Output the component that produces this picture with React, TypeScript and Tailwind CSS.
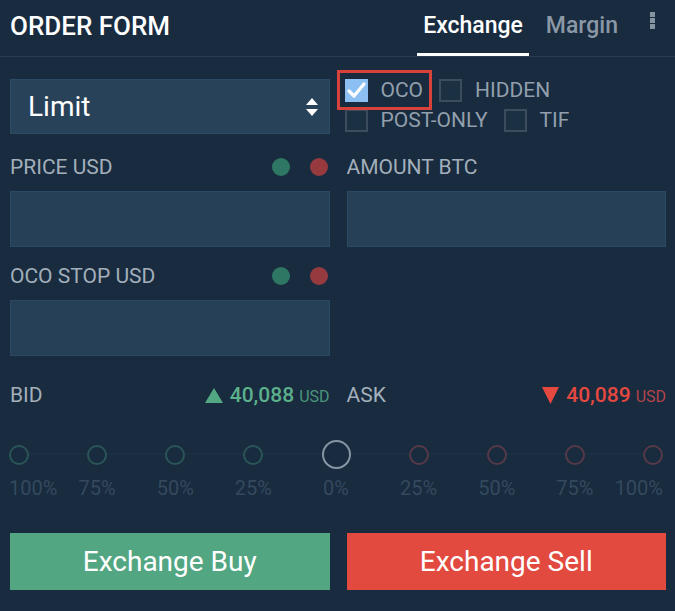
import React from "react";

const font = { fontFamily: "Roboto, 'Noto Sans', Arial, sans-serif" };

function Check({ checked, label }: { checked?: boolean; label: string }) {
  return (
    <div className="flex items-center gap-[13px]">
      {checked ? (
        <div className="w-[23px] h-[23px] bg-[#8cc0f2] flex items-center justify-center">
          <svg width="19" height="17" viewBox="0 0 19 17">
            <path d="M2 9 L7 14 L17 2" fill="none" stroke="#ffffff" strokeWidth="3.2" strokeLinecap="round" strokeLinejoin="round" />
          </svg>
        </div>
      ) : (
        <div className="w-[23px] h-[23px] border-2 border-[#3a4c5d] bg-[#1c3044]" />
      )}
      <span className="text-[21px] leading-none text-[#929fac]">{label}</span>
    </div>
  );
}

function Dots() {
  return (
    <div className="flex items-center gap-[20px]">
      <div className="w-[18px] h-[18px] rounded-full bg-[#2e7764]" />
      <div className="w-[18px] h-[18px] rounded-full bg-[#973a3f]" />
    </div>
  );
}

function Field({ label, dots }: { label: string; dots?: boolean }) {
  return (
    <div className="flex flex-col">
      <div className="h-[24px] flex items-center justify-between pr-[2px]">
        <span className="text-[21px] leading-none text-[#a3afba]">{label}</span>
        {dots && <Dots />}
      </div>
      <div className="mt-[12px] h-[56px] bg-[#264157] border border-[#2a4963]" />
    </div>
  );
}

const ticks: { label: string; kind: "g" | "c" | "r" }[] = [
  { label: "100%", kind: "g" },
  { label: "75%", kind: "g" },
  { label: "50%", kind: "g" },
  { label: "25%", kind: "g" },
  { label: "0%", kind: "c" },
  { label: "25%", kind: "r" },
  { label: "50%", kind: "r" },
  { label: "75%", kind: "r" },
  { label: "100%", kind: "r" },
];

export default function App() {
  return (
    <div className="w-[675px] h-[611px] bg-[#182b3f] text-white overflow-hidden" style={font}>
      {/* Header */}
      <div className="h-[57px] border-b border-[#2a3d50] flex justify-between pl-[10px] pr-[20px]">
        <div className="flex items-center pb-[4px] text-[26px] font-medium text-white">ORDER FORM</div>
        <div className="flex h-full">
          <div className="h-full px-[6px] flex items-center border-b-[3px] border-white pb-[1px] text-[23px] font-medium text-white">
            Exchange
          </div>
          <div className="h-full ml-[11px] px-[6px] flex items-center border-b-[3px] border-transparent pb-[1px] text-[23px] font-medium text-[#8a98a6]">
            Margin
          </div>
          <div className="ml-[26px] pt-[12px] flex flex-col gap-[1px]">
            <div className="w-[5px] h-[5px] bg-[#8694a2]" />
            <div className="w-[5px] h-[5px] bg-[#8694a2]" />
            <div className="w-[5px] h-[5px] bg-[#8694a2]" />
          </div>
        </div>
      </div>

      <div className="pl-[10px] pr-[9px] pt-[22px]">
        <div className="grid grid-cols-2 gap-x-[17px]">
          {/* Left column */}
          <div className="flex flex-col">
            <div className="h-[55px] bg-[#274259] border border-[#2b4a64] flex items-center justify-between pl-[17px] pr-[10px]">
              <span className="text-[28px] leading-none text-white">Limit</span>
              <svg width="14" height="20" viewBox="0 0 14 20">
                <path d="M7 1 L13 8 L1 8 Z" fill="#ffffff" />
                <path d="M7 19 L13 12 L1 12 Z" fill="#ffffff" />
              </svg>
            </div>
            <div className="mt-[21px]">
              <Field label="PRICE USD" dots />
            </div>
            <div className="mt-[17px]">
              <Field label="OCO STOP USD" dots />
            </div>
          </div>
          {/* Right column */}
          <div className="flex flex-col">
            <div className="h-[55px] flex flex-col gap-[7px] -ml-[2px]">
              <div className="flex items-center gap-[16px]">
                <div className="relative">
                  <Check checked label="OCO" />
                  <div className="absolute -left-[8px] -top-[9px] -right-[9px] -bottom-[8px] border-[3px] border-[#d9413b] pointer-events-none" />
                </div>
                <Check label="HIDDEN" />
              </div>
              <div className="flex items-center gap-[16px]">
                <Check label="POST-ONLY" />
                <Check label="TIF" />
              </div>
            </div>
            <div className="mt-[21px]">
              <Field label="AMOUNT BTC" />
            </div>
          </div>
        </div>

        {/* Bid / Ask */}
        <div className="mt-[27px] grid grid-cols-2 gap-x-[17px]">
          <div className="h-[24px] flex items-center justify-between">
            <span className="text-[21px] leading-none text-[#a3afba]">BID</span>
            <div className="flex items-baseline">
              <svg width="18" height="15" viewBox="0 0 18 15" className="mr-[7px] self-center">
                <path d="M9 0 L18 15 L0 15 Z" fill="#53a883" />
              </svg>
              <span className="text-[21px] leading-none font-medium text-[#5cb08c]">40,088</span>
              <span className="ml-[5px] text-[16px] leading-none text-[#4a967a]">USD</span>
            </div>
          </div>
          <div className="h-[24px] flex items-center justify-between">
            <span className="text-[21px] leading-none text-[#a3afba]">ASK</span>
            <div className="flex items-baseline">
              <svg width="17" height="17" viewBox="0 0 17 17" className="mr-[7px] self-center">
                <path d="M0 0 L17 0 L8.5 17 Z" fill="#e4483f" />
              </svg>
              <span className="text-[21px] leading-none font-medium text-[#e4483f]">40,089</span>
              <span className="ml-[5px] text-[16px] leading-none text-[#b2444a]">USD</span>
            </div>
          </div>
        </div>

        {/* Slider */}
        <div className="mt-[33px] -ml-[1px] mr-[3px]">
          <div className="relative h-[29px] flex items-center justify-between">
            <div className="absolute left-[10px] right-[10px] top-[13px] h-[2px] bg-[#1c3044]" />
            {ticks.map((t, i) =>
              t.kind === "c" ? (
                <div key={i} className="relative w-[29px] h-[29px] rounded-full border-2 border-[#8695a2] bg-[#182b3f]" />
              ) : (
                <div
                  key={i}
                  className={
                    "relative w-[20px] h-[20px] rounded-full border-2 bg-[#182b3f] " +
                    (t.kind === "g" ? "border-[#2a5657]" : "border-[#573a48]")
                  }
                />
              )
            )}
          </div>
          <div className="mt-[8px] h-[22px] flex items-center justify-between">
            {ticks.map((t, i) => (
              <div
                key={i}
                className={
                  (t.kind === "c" ? "w-[29px] " : "w-[20px] ") +
                  "flex whitespace-nowrap " +
                  (i === 0 ? "justify-start" : i === ticks.length - 1 ? "justify-end" : "justify-center")
                }
              >
                <span className="text-[20px] leading-none text-[#34495d]">{t.label}</span>
              </div>
            ))}
          </div>
        </div>

        {/* Buttons */}
        <div className="mt-[34px] grid grid-cols-2 gap-x-[17px]">
          <button className="h-[57px] bg-[#52a682] text-white text-[28px] flex items-center justify-center">
            Exchange Buy
          </button>
          <button className="h-[57px] bg-[#e2493f] text-white text-[28px] flex items-center justify-center">
            Exchange Sell
          </button>
        </div>
      </div>
    </div>
  );
}
